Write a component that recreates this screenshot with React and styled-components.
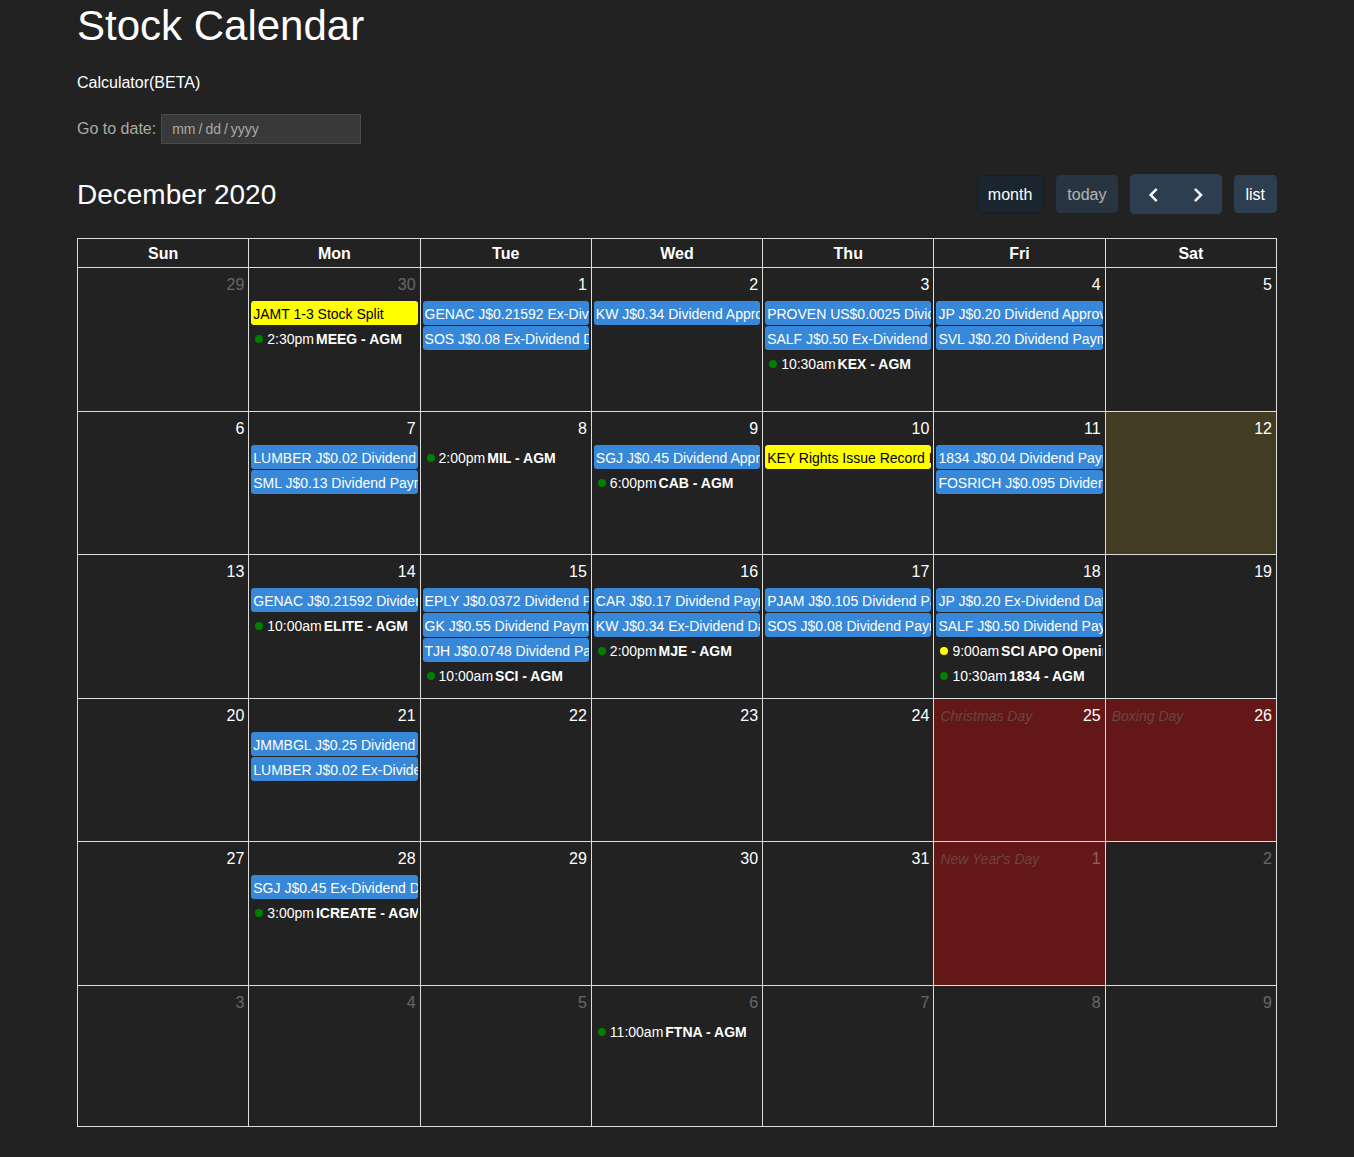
import React from "react";
import styled, { createGlobalStyle, css } from "styled-components";

const GlobalStyle = createGlobalStyle`
  *, *::before, *::after { box-sizing: border-box; }
  html { background: #222; color-scheme: dark; }
  body {
    margin: 0;
    background: #222;
    color: #fff;
    font-family: "Liberation Sans", Arial, sans-serif;
    font-size: 16px;
    line-height: 24px;
  }
`;

const Page = styled.main`
  max-width: 1230px;
  margin: 0 auto;
  padding: 0 15px 30px;
`;

const Title = styled.h1`
  margin: 0 0 19px;
  font-size: 42px;
  font-weight: 400;
  line-height: 52px;
`;

const NavLink = styled.a`
  display: inline-block;
  color: #fff;
  text-decoration: none;
`;

const DateForm = styled.form`
  display: flex;
  align-items: center;
  gap: 5px;
  margin: 19px 0 30px;
  color: #aaa;
`;

const DateInput = styled.input`
  width: 200px;
  height: 30px;
  padding: 0 9px;
  border: 1px solid #4a4a4a;
  border-radius: 0;
  background: #393939;
  color: #aaa;
  font-family: inherit;
  font-size: 14px;

  &::-webkit-calendar-picker-indicator { display: none; }
  &::-webkit-datetime-edit-text { padding: 0 2px; }
  &::-webkit-datetime-edit-month-field,
  &::-webkit-datetime-edit-day-field,
  &::-webkit-datetime-edit-year-field { padding: 0 1px; color: #aaa; }
`;

const Toolbar = styled.header`
  display: flex;
  align-items: center;
  justify-content: space-between;
  margin-bottom: 24px;
`;

const MonthTitle = styled.h2`
  margin: 0;
  padding-top: 2px;
  font-size: 28px;
  font-weight: 400;
  line-height: 34px;
`;

const Controls = styled.div`
  display: flex;
  align-items: center;
  gap: 12px;
`;

const ButtonGroup = styled.div`
  display: flex;
`;

const Button = styled.button`
  display: flex;
  align-items: center;
  justify-content: center;
  padding: 7px 11px 5px 10px;
  border: 1px solid #2c3e50;
  border-radius: 4px;
  background: #2c3e50;
  color: #fff;
  font: inherit;
  cursor: pointer;

  &:disabled { opacity: 0.65; cursor: default; }

  ${(p) => p.$active && css`
    background: #1a252f;
    border-color: #151e27;
  `}

  ${ButtonGroup} & { padding: 8px 10px 6px; }
  ${ButtonGroup} &:first-child { border-radius: 4px 0 0 4px; }
  ${ButtonGroup} &:last-child { border-radius: 0 4px 4px 0; }
`;

const Grid = styled.table`
  width: 100%;
  table-layout: fixed;
  border-collapse: collapse;
  border: 1px solid #ddd;
`;

const Weekday = styled.th`
  height: 29px;
  padding: 2px 0 0;
  border: 1px solid #ddd;
  font-weight: 700;
`;

const Week = styled.tr`
  height: 144px;
  &:nth-child(even) { height: 143px; }
  &:last-child { height: 141px; }
`;

const fills = {
  today: "rgba(255, 220, 40, 0.15)",
  holiday: "rgba(255, 0, 0, 0.3)",
};

const Day = styled.td`
  padding: 0;
  border: 1px solid #ddd;
  vertical-align: top;
  background: ${(p) => fills[p.$fill] || "transparent"};
  background-clip: padding-box;
`;

const DayTop = styled.div`
  display: flex;
  justify-content: space-between;
  padding: 5px 4px 3px;
`;

const DayNumber = styled.span`
  margin-left: auto;
  opacity: ${(p) => (p.$muted ? 0.3 : 1)};
`;

const Holiday = styled.em`
  padding: 0 2px;
  color: #6a4545;
  font-size: 14px;
  line-height: 24px;
`;

const Events = styled.ul`
  display: flex;
  flex-direction: column;
  gap: 1px;
  margin: 1px 2px 0;
  padding: 0;
  list-style: none;
  font-size: 14px;
  line-height: 20px;
`;

const Bar = styled.li`
  padding: 3px 2px 1px;
  border-radius: 3px;
  background: ${(p) => (p.$yellow ? "#ff0" : "#3788d8")};
  color: ${(p) => (p.$yellow ? "#000" : "#fff")};
  white-space: nowrap;
  overflow: hidden;
`;

const Timed = styled.li`
  display: flex;
  align-items: center;
  padding: 3px 0 1px;
  white-space: nowrap;
  overflow: hidden;

  time { margin-right: 2px; }
`;

const Dot = styled.span`
  flex: none;
  width: 8px;
  height: 8px;
  margin: 0 4px;
  border-radius: 50%;
  background: ${(p) => p.$color};
`;

const bar = (title) => ({ title });
const split = (title) => ({ title, yellow: true });
const at = (time, title, color = "green") => ({ time, title, color });

const events = {
  1: [split("JAMT 1-3 Stock Split"), at("2:30pm", "MEEG - AGM")],
  2: [bar("GENAC J$0.21592 Ex-Dividend"), bar("SOS J$0.08 Ex-Dividend Date")],
  3: [bar("KW J$0.34 Dividend Approval")],
  4: [bar("PROVEN US$0.0025 Dividend"), bar("SALF J$0.50 Ex-Dividend Date"), at("10:30am", "KEX - AGM")],
  5: [bar("JP J$0.20 Dividend Approval"), bar("SVL J$0.20 Dividend Payment")],
  8: [bar("LUMBER J$0.02 Dividend Approval"), bar("SML J$0.13 Dividend Payment")],
  9: [at("2:00pm", "MIL - AGM")],
  10: [bar("SGJ J$0.45 Dividend Approval"), at("6:00pm", "CAB - AGM")],
  11: [split("KEY Rights Issue Record Date")],
  12: [bar("1834 J$0.04 Dividend Payment"), bar("FOSRICH J$0.095 Dividend")],
  15: [bar("GENAC J$0.21592 Dividend"), at("10:00am", "ELITE - AGM")],
  16: [bar("EPLY J$0.0372 Dividend Payment"), bar("GK J$0.55 Dividend Payment"), bar("TJH J$0.0748 Dividend Payment"), at("10:00am", "SCI - AGM")],
  17: [bar("CAR J$0.17 Dividend Payment"), bar("KW J$0.34 Ex-Dividend Date"), at("2:00pm", "MJE - AGM")],
  18: [bar("PJAM J$0.105 Dividend Payment"), bar("SOS J$0.08 Dividend Payment")],
  19: [bar("JP J$0.20 Ex-Dividend Date"), bar("SALF J$0.50 Dividend Payment"), at("9:00am", "SCI APO Opening", "#ff0"), at("10:30am", "1834 - AGM")],
  22: [bar("JMMBGL J$0.25 Dividend"), bar("LUMBER J$0.02 Ex-Dividend")],
  29: [bar("SGJ J$0.45 Ex-Dividend Date"), at("3:00pm", "ICREATE - AGM")],
  38: [at("11:00am", "FTNA - AGM")],
};

const holidays = { 26: "Christmas Day", 27: "Boxing Day", 33: "New Year's Day" };
const TODAY = 13;
const weekdays = ["Sun", "Mon", "Tue", "Wed", "Thu", "Fri", "Sat"];

const days = Array.from({ length: 42 }, (_, i) => {
  const date = new Date(2020, 10, 29 + i);
  return {
    index: i,
    number: date.getDate(),
    muted: date.getMonth() !== 11,
    holiday: holidays[i],
    fill: holidays[i] ? "holiday" : i === TODAY ? "today" : undefined,
    events: events[i] || [],
  };
});
const weeks = [0, 1, 2, 3, 4, 5].map((w) => days.slice(w * 7, w * 7 + 7));

function Chevron({ d }) {
  return (
    <svg width="24" height="24" viewBox="0 0 32 32" fill="#fff" stroke="#fff" strokeWidth="0.8" aria-hidden="true">
      <path d={d} />
    </svg>
  );
}

function DayEvent({ event }) {
  if (!event.time) return <Bar $yellow={event.yellow}>{event.title}</Bar>;
  return (
    <Timed>
      <Dot $color={event.color} />
      <time>{event.time}</time>
      <strong>{event.title}</strong>
    </Timed>
  );
}

export default function App() {
  return (
    <Page>
      <GlobalStyle />
      <Title>Stock Calendar</Title>
      <NavLink href="#calculator">Calculator(BETA)</NavLink>
      <DateForm>
        <label htmlFor="goto">Go to date:</label>
        <DateInput id="goto" type="date" />
      </DateForm>
      <Toolbar>
        <MonthTitle>December 2020</MonthTitle>
        <Controls>
          <Button type="button" $active>month</Button>
          <Button type="button" disabled>today</Button>
          <ButtonGroup>
            <Button type="button" aria-label="Previous month">
              <Chevron d="M19.8 7.2l1.9 1.9-6.9 6.9 6.9 6.9-1.9 1.9-8.8-8.8z" />
            </Button>
            <Button type="button" aria-label="Next month">
              <Chevron d="M11.8 7.2l-1.9 1.9 6.9 6.9-6.9 6.9 1.9 1.9 8.8-8.8z" />
            </Button>
          </ButtonGroup>
          <Button type="button">list</Button>
        </Controls>
      </Toolbar>
      <Grid>
        <thead>
          <tr>
            {weekdays.map((name) => (
              <Weekday key={name} scope="col">{name}</Weekday>
            ))}
          </tr>
        </thead>
        <tbody>
          {weeks.map((week) => (
            <Week key={week[0].index}>
              {week.map((day) => (
                <Day key={day.index} $fill={day.fill}>
                  <DayTop>
                    {day.holiday && <Holiday>{day.holiday}</Holiday>}
                    <DayNumber $muted={day.muted}>{day.number}</DayNumber>
                  </DayTop>
                  {day.events.length > 0 && (
                    <Events>
                      {day.events.map((event) => (
                        <DayEvent key={event.title} event={event} />
                      ))}
                    </Events>
                  )}
                </Day>
              ))}
            </Week>
          ))}
        </tbody>
      </Grid>
    </Page>
  );
}
